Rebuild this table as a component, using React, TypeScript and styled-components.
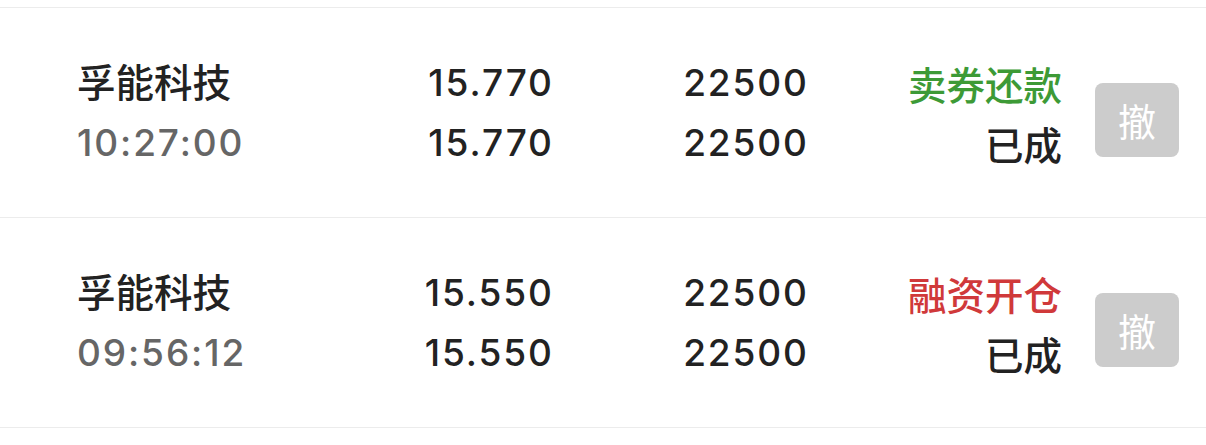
import React from "react";
import styled, { createGlobalStyle } from "styled-components";

const Global = createGlobalStyle`
  html, body { margin: 0; padding: 0; background: #fff; }
  body { font-family: "Noto Sans CJK SC", "Noto Sans", sans-serif; }
`;

const List = styled.div`
  padding-top: 7px;
  background: #fff;
`;

const Row = styled.div`
  display: grid;
  grid-template-columns: 323px 152px 255px 255px 117px;
  align-items: center;
  height: 209px;
  padding-left: 77px;
  border-top: 1px solid #ececec;
  &:last-child { border-bottom: 1px solid #ececec; }
`;

const Cell = styled.div<{ $align?: "left" | "right" }>`
  display: flex;
  flex-direction: column;
  align-items: ${(p) => (p.$align === "right" ? "flex-end" : "flex-start")};
`;

const Line = styled.div<{ $color?: string; $num?: boolean; $lh?: number }>`
  height: 60px;
  line-height: ${(p) => p.$lh ?? 60}px;
  font-size: ${(p) => (p.$num ? "37px" : "38.5px")};
  font-family: ${(p) =>
    p.$num
      ? `Inter, "Noto Sans CJK SC", sans-serif`
      : `"Noto Sans CJK SC", sans-serif`};
  letter-spacing: ${(p) => (p.$num ? "1.9px" : "0")};
  margin-right: ${(p) => (p.$num ? "-1.9px" : "0")};
  color: ${(p) => p.$color || "#222"};
  font-weight: 500;
  white-space: nowrap;
`;

const CancelButton = styled.button`
  justify-self: end;
  margin-top: 14px;
  width: 84px;
  height: 74px;
  border: none;
  border-radius: 8px;
  background: #cccccc;
  color: #fff;
  font-family: "Noto Sans CJK SC", sans-serif;
  font-size: 38px;
  padding: 0;
  display: flex;
  align-items: center;
  justify-content: center;
`;

type Order = {
  name: string;
  time: string;
  price: string;
  dealPrice: string;
  qty: string;
  dealQty: string;
  type: string;
  typeColor: string;
  status: string;
};

const orders: Order[] = [
  {
    name: "孚能科技",
    time: "10:27:00",
    price: "15.770",
    dealPrice: "15.770",
    qty: "22500",
    dealQty: "22500",
    type: "卖券还款",
    typeColor: "#3d9a36",
    status: "已成",
  },
  {
    name: "孚能科技",
    time: "09:56:12",
    price: "15.550",
    dealPrice: "15.550",
    qty: "22500",
    dealQty: "22500",
    type: "融资开仓",
    typeColor: "#d0393a",
    status: "已成",
  },
];

export default function App() {
  return (
    <>
      <Global />
      <List>
        {orders.map((o, i) => (
          <Row key={i}>
            <Cell>
              <Line $lh={54}>{o.name}</Line>
              <Line $num $color="#666">{o.time}</Line>
            </Cell>
            <Cell $align="right">
              <Line $num>{o.price}</Line>
              <Line $num>{o.dealPrice}</Line>
            </Cell>
            <Cell $align="right">
              <Line $num>{o.qty}</Line>
              <Line $num>{o.dealQty}</Line>
            </Cell>
            <Cell $align="right">
              <Line $color={o.typeColor}>{o.type}</Line>
              <Line>{o.status}</Line>
            </Cell>
            <CancelButton>撤</CancelButton>
          </Row>
        ))}
      </List>
    </>
  );
}
